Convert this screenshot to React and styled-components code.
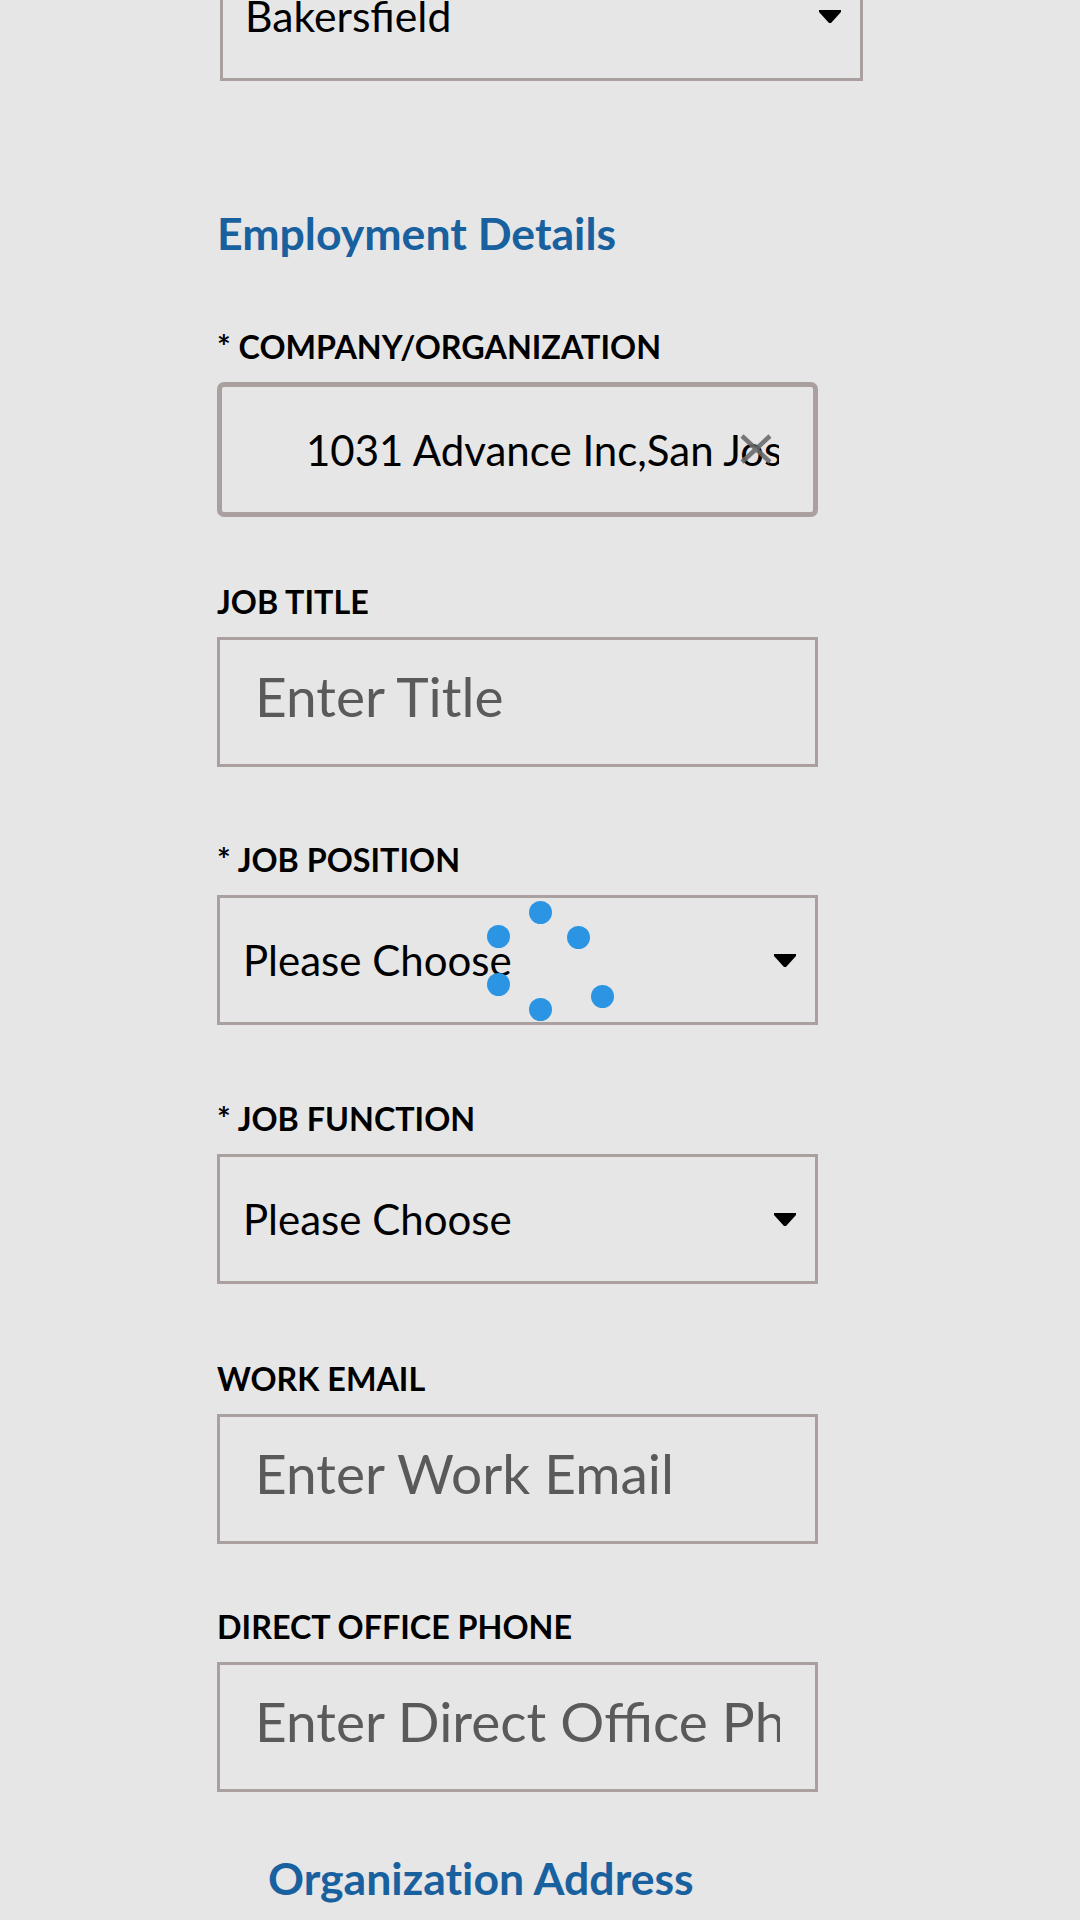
import React from 'react';
import styled, { createGlobalStyle } from 'styled-components';

const GlobalStyle = createGlobalStyle`
  html, body {
    margin: 0;
    padding: 0;
    background: #e6e6e6;
  }
  body {
    font-family: Lato, "Open Sans", "Liberation Sans", sans-serif;
    color: #000;
  }
  * {
    box-sizing: border-box;
  }
`;

const BORDER = '#aaa0a0';

const fields = [
  { key: 'title', label: 'JOB TITLE', placeholder: 'Enter Title', top: 67 },
  { key: 'position', label: '* JOB POSITION', select: true, top: 75 },
  { key: 'function', label: '* JOB FUNCTION', select: true, top: 76 },
  { key: 'email', label: 'WORK EMAIL', placeholder: 'Enter Work Email', top: 77 },
  { key: 'phone', label: 'DIRECT OFFICE PHONE', placeholder: 'Enter Direct Office Phone', top: 65 },
];

const spinnerDots = [
  [0, -48],
  [38, -23],
  [62, 36],
  [0, 49],
  [-42, 24],
  [-42, -24],
];

function Caret() {
  return (
    <CaretIcon viewBox="0 0 22 13" aria-hidden="true">
      <path d="M0 0 H22 V2 L12 13 H10 L0 2 Z" fill="#000" />
    </CaretIcon>
  );
}

function SelectField({ value, width, offset, size }) {
  return (
    <SelectBox $width={width} $offset={offset}>
      <SelectText $size={size}>{value}</SelectText>
      <Caret />
    </SelectBox>
  );
}

export default function App() {
  return (
    <Page>
      <GlobalStyle />
      <Column>
        <SelectField value="Bakersfield" width={643} offset={3} size={42.7} />

        <SectionTitle $top={125}>Employment Details</SectionTitle>

        <Field $top={70}>
          <Label>* COMPANY/ORGANIZATION</Label>
          <CompanyBox>
            <CompanyInput readOnly value="1031 Advance Inc,San Jose, CA" />
            <ClearIcon viewBox="0 0 34 30" aria-hidden="true">
              <path d="M3 2 L31 28 M31 2 L3 28" stroke="#6b6b6b" strokeWidth="4.5" opacity="0.9" />
            </ClearIcon>
          </CompanyBox>
        </Field>

        {fields.map((f) => (
          <Field key={f.key} $top={f.top}>
            <Label>{f.label}</Label>
            {f.select ? (
              <SelectField value="Please Choose" />
            ) : (
              <TextInput placeholder={f.placeholder} />
            )}
          </Field>
        ))}

        <SectionTitle $top={59} $indent={51}>Organization Address</SectionTitle>
      </Column>

      <Spinner aria-label="Loading">
        {spinnerDots.map(([x, y], i) => (
          <Dot key={i} style={{ transform: `translate(${x}px, ${y}px)` }} />
        ))}
      </Spinner>
    </Page>
  );
}

const Page = styled.div`
  width: 1080px;
  height: 1920px;
  overflow: hidden;
`;

const Column = styled.div`
  margin-left: 217px;
  width: 601px;
  display: flex;
  flex-direction: column;
`;

const SectionTitle = styled.h2`
  margin: ${(p) => p.$top}px 0 0 ${(p) => p.$indent || 0}px;
  font-size: 44.6px;
  line-height: 53px;
  font-weight: 700;
  color: #19609f;
  white-space: nowrap;
  font-variant-ligatures: no-common-ligatures;
`;

const Field = styled.div`
  margin-top: ${(p) => p.$top}px;
  display: flex;
  flex-direction: column;
`;

const Label = styled.label`
  display: block;
  font-size: 32.3px;
  line-height: 36px;
  font-weight: 700;
  margin-bottom: 17px;
  white-space: nowrap;
`;

const SelectBox = styled.div`
  width: ${(p) => p.$width || 601}px;
  height: 130px;
  margin-left: ${(p) => p.$offset || 0}px;
  margin-top: ${(p) => (p.$offset ? '-49px' : '0')};
  border: 3px solid ${BORDER};
  display: flex;
  align-items: center;
  padding: 0 19px 0 ${(p) => (p.$offset ? 22 : 23)}px;
`;

const SelectText = styled.span`
  flex: 1;
  font-size: ${(p) => p.$size || 42}px;
  line-height: 52px;
  color: #000;
  white-space: nowrap;
`;

const CaretIcon = styled.svg`
  width: 22px;
  height: 13px;
  flex-shrink: 0;
`;

const TextInput = styled.input`
  width: 601px;
  height: 130px;
  border: 3px solid ${BORDER};
  background: transparent;
  padding: 0 35px 12px 35px;
  font-family: inherit;
  font-size: 55px;
  color: #000;
  outline: none;
  border-radius: 0;

  &::placeholder {
    color: #5a5a5a;
    opacity: 1;
  }
`;

const CompanyBox = styled.div`
  position: relative;
  width: 601px;
  height: 135px;
  border: 5px solid ${BORDER};
  border-radius: 7px;
  display: flex;
`;

const CompanyInput = styled.input`
  flex: 1;
  min-width: 0;
  border: none;
  background: transparent;
  padding: 0 34px 0 84px;
  font-family: inherit;
  font-size: 42px;
  color: #000;
  outline: none;
`;

const ClearIcon = styled.svg`
  position: absolute;
  right: 40px;
  top: 50%;
  width: 34px;
  height: 30px;
  margin-top: -16px;
`;

const Spinner = styled.div`
  position: fixed;
  left: 540px;
  top: 960px;
  width: 0;
  height: 0;
`;

const Dot = styled.span`
  position: absolute;
  left: -11.5px;
  top: -11.5px;
  width: 23px;
  height: 23px;
  border-radius: 50%;
  background: #2b95e4;
`;
